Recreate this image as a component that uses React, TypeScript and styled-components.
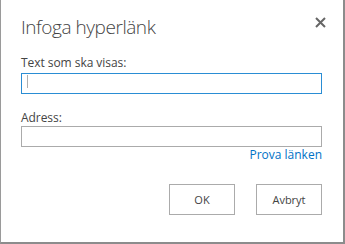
import styled, { createGlobalStyle } from "styled-components";

const GlobalStyle = createGlobalStyle`
  html, body {
    margin: 0;
    padding: 0;
    background: #ffffff;
  }
  body {
    font-family: "Open Sans", "Liberation Sans", sans-serif;
    color: #444444;
  }
`;

const Dialog = styled.div`
  box-sizing: border-box;
  width: 345px;
  height: 244px;
  background: #ffffff;
  border-left: 1px solid #9a9a9a;
  border-right: 2px solid #8c8c8c;
  border-bottom: 2px solid #8c8c8c;
  padding: 0 22px 0 20px;
  display: flex;
  flex-direction: column;
`;

const Header = styled.div`
  display: flex;
  justify-content: space-between;
  align-items: flex-start;
  padding-top: 14px;
  height: 40px;
  box-sizing: border-box;
`;

const Title = styled.h1`
  margin: 0;
  font-size: 19px;
  font-weight: 300;
  line-height: 26px;
  color: #444444;
  letter-spacing: -0.45px;
`;

const CloseButton = styled.button`
  border: 0;
  background: none;
  padding: 0;
  margin: 1px -6px 0 0;
  width: 14px;
  height: 14px;
  display: flex;
  align-items: center;
  justify-content: center;
  cursor: pointer;
`;

const Field = styled.div<{ $top: number }>`
  display: flex;
  flex-direction: column;
  margin-top: ${(p) => p.$top}px;
`;

const Label = styled.label`
  font-size: 12px;
  line-height: 16px;
  color: #444444;
  letter-spacing: -0.05px;
`;

const Input = styled.input<{ $focused?: boolean }>`
  box-sizing: border-box;
  width: 301px;
  height: 21px;
  margin: 0;
  padding: 0 5px;
  border: 1px solid ${(p) => (p.$focused ? "#2a8dd4" : "#ababab")};
  outline: none;
  font-family: inherit;
  font-size: 12px;
  color: #444444;
  background: #ffffff;
`;

const Caret = styled.span`
  position: absolute;
  left: 6px;
  top: 4px;
  width: 1px;
  height: 13px;
  background: #b0b0b0;
`;

const InputWrap = styled.div`
  position: relative;
  width: 301px;
`;

const LinkRow = styled.div`
  width: 301px;
  display: flex;
  justify-content: flex-end;
`;

const TryLink = styled.a`
  font-size: 12px;
  line-height: 16px;
  color: #0072c6;
  text-decoration: none;
  cursor: pointer;
`;

const Buttons = styled.div`
  width: 301px;
  display: flex;
  justify-content: flex-end;
  gap: 21px;
  margin-top: 21px;
`;

const Button = styled.button`
  box-sizing: border-box;
  width: 66px;
  height: 31px;
  background: #ffffff;
  border: 1px solid #ababab;
  font-family: inherit;
  font-size: 11px;
  color: #444444;
  padding: 0;
  cursor: pointer;
`;

export default function App() {
  return (
    <>
      <GlobalStyle />
      <Dialog>
        <Header>
          <Title>Infoga hyperlänk</Title>
          <CloseButton aria-label="Stäng">
            <svg width="11" height="11" viewBox="0 0 11 11">
              <path
                d="M1 1 L10 10 M10 1 L1 10"
                stroke="#666666"
                strokeWidth="2"
                fill="none"
              />
            </svg>
          </CloseButton>
        </Header>
        <Field $top={15}>
          <Label>Text som ska visas:</Label>
          <InputWrap>
            <Input $focused />
            <Caret />
          </InputWrap>
        </Field>
        <Field $top={16}>
          <Label>Adress:</Label>
          <Input />
        </Field>
        <LinkRow>
          <TryLink>Prova länken</TryLink>
        </LinkRow>
        <Buttons>
          <Button>OK</Button>
          <Button>Avbryt</Button>
        </Buttons>
      </Dialog>
    </>
  );
}
